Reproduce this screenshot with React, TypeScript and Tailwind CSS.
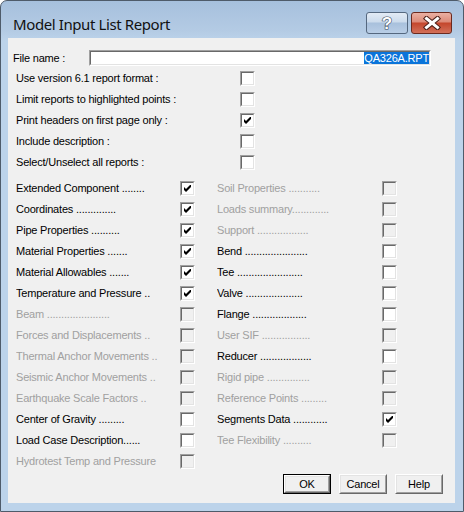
import React from "react";

type Item = {
  label: string;
  checked?: boolean;
  disabled?: boolean;
};

const topItems: Item[] = [
  { label: "Use version 6.1 report format :" },
  { label: "Limit reports to highlighted points :" },
  { label: "Print headers on first page only :", checked: true },
  { label: "Include description :" },
  { label: "Select/Unselect all reports :" },
];

const leftItems: Item[] = [
  { label: "Extended Component ........", checked: true },
  { label: "Coordinates ..............", checked: true },
  { label: "Pipe Properties ..........", checked: true },
  { label: "Material Properties .......", checked: true },
  { label: "Material Allowables .......", checked: true },
  { label: "Temperature and Pressure ..", checked: true },
  { label: "Beam ......................", disabled: true },
  { label: "Forces and Displacements ..", disabled: true },
  { label: "Thermal Anchor Movements ..", disabled: true },
  { label: "Seismic Anchor Movements ..", disabled: true },
  { label: "Earthquake Scale Factors ..", disabled: true },
  { label: "Center of Gravity ........." },
  { label: "Load Case Description......" },
  { label: "Hydrotest Temp and Pressure", disabled: true },
];

const rightItems: Item[] = [
  { label: "Soil Properties ...........", disabled: true },
  { label: "Loads summary.............", disabled: true },
  { label: "Support ..................", disabled: true },
  { label: "Bend ......................" },
  { label: "Tee ......................." },
  { label: "Valve ...................." },
  { label: "Flange ..................." },
  { label: "User SIF .................", disabled: true },
  { label: "Reducer .................." },
  { label: "Rigid pipe ...............", disabled: true },
  { label: "Reference Points .........", disabled: true },
  { label: "Segments Data ............", checked: true },
  { label: "Tee Flexibility ..........", disabled: true },
];

const CheckBox = ({ checked, disabled }: { checked?: boolean; disabled?: boolean }) => (
  <div className="w-[15px] h-[15px] shrink-0 border border-t-[#a0a0a0] border-l-[#a0a0a0] border-r-white border-b-white">
    <div
      className={`w-full h-full border border-t-[#696969] border-l-[#696969] border-r-[#e3e3e3] border-b-[#e3e3e3] flex items-center justify-center ${
        disabled ? "bg-[#f0f0f0]" : "bg-white"
      }`}
    >
      {checked && (
        <svg width="7" height="7" viewBox="0 0 7 7">
          <polygon points="0,2 2,4 7,-1 7,2 2,7 0,5" fill="#000" />
        </svg>
      )}
    </div>
  </div>
);

const Row = ({ item, labelWidth }: { item: Item; labelWidth: string }) => (
  <div className="h-[21px] flex items-center">
    <span
      className={`${labelWidth} whitespace-nowrap overflow-hidden ${
        item.disabled ? "text-[#a0a0a0]" : "text-black"
      }`}
    >
      {item.label}
    </span>
    <CheckBox checked={item.checked} disabled={item.disabled} />
  </div>
);

const PushButton = ({ label, isDefault }: { label: string; isDefault?: boolean }) => (
  <div className={`w-[48px] h-[20px] ${isDefault ? "border border-black" : ""}`}>
    <div className="w-full h-full border border-t-white border-l-white border-r-[#696969] border-b-[#696969]">
      <div className="w-full h-full border border-t-[#e3e3e3] border-l-[#e3e3e3] border-r-[#a0a0a0] border-b-[#a0a0a0] bg-[#f0f0f0] flex items-center justify-center text-black">
        {label}
      </div>
    </div>
  </div>
);

const App = () => {
  return (
    <div className="w-[464px] h-[512px] overflow-hidden bg-white">
      <div className="w-[464px] h-[512px] flex flex-col border border-[#4e5b6a] rounded-t-[7px] overflow-hidden bg-[linear-gradient(to_bottom,#a6c0dd_0px,#b4cbe4_30px,#bcd3ea_40px,#bcd3ea_100%)]">
        {/* Title bar */}
        <div className="h-[37px] shrink-0 flex items-start justify-between">
          <div className="mt-[13px] ml-[12px] h-[20px] leading-[20px] text-[15px] tracking-[-0.4px] text-[#111] font-['Noto_Sans',sans-serif]">
            Model Input List Report
          </div>
          <div className="mt-[11px] mr-[11px] flex gap-[3px]">
            <div className="w-[42px] h-[22px] rounded-[3px] border border-[#55687f] bg-[linear-gradient(to_bottom,#e2ebf5_0%,#ccdbec_45%,#a8c0dc_50%,#b9cee6_100%)] flex items-center justify-center">
              <svg width="16" height="18" viewBox="0 0 16 18">
                <text
                  x="8"
                  y="15"
                  textAnchor="middle"
                  fontFamily="'Liberation Sans', Arial, sans-serif"
                  fontWeight="bold"
                  fontSize="17"
                  fill="#fff"
                  stroke="#3a4a5c"
                  strokeWidth="1.2"
                  paintOrder="stroke"
                >
                  ?
                </text>
              </svg>
            </div>
            <div className="w-[41px] h-[22px] rounded-[3px] border border-[#6b2a1f] bg-[linear-gradient(to_bottom,#eab0a3_0%,#dc8a78_45%,#c4462c_50%,#d2705a_100%)] flex items-center justify-center">
              <svg width="18" height="14" viewBox="0 0 18 14">
                <g strokeLinecap="square">
                  <line x1="3.5" y1="2.5" x2="14.5" y2="11.5" stroke="#4a1e17" strokeWidth="5" />
                  <line x1="14.5" y1="2.5" x2="3.5" y2="11.5" stroke="#4a1e17" strokeWidth="5" />
                  <line x1="3.5" y1="2.5" x2="14.5" y2="11.5" stroke="#fff" strokeWidth="3" />
                  <line x1="14.5" y1="2.5" x2="3.5" y2="11.5" stroke="#fff" strokeWidth="3" />
                </g>
              </svg>
            </div>
          </div>
        </div>

        {/* Client area */}
        <div className="ml-[7px] mr-[8px] h-[465px] shrink-0 bg-[#f0f0f0] flex flex-col text-[11px] tracking-[-0.2px] font-['Liberation_Sans',Arial,sans-serif]">
          {/* File name */}
          <div className="mt-[12px] h-[16px] flex items-center">
            <span className="w-[81px] pl-[5px] text-black">File name :</span>
            <div className="w-[342px] h-[16px] border border-t-[#a0a0a0] border-l-[#a0a0a0] border-r-white border-b-white">
              <div className="w-full h-full border border-t-[#696969] border-l-[#696969] border-r-[#e3e3e3] border-b-[#e3e3e3] bg-white flex items-center justify-end">
                <span className="h-[12px] leading-[12px] bg-[#0a74da] text-white">QA326A.RPT</span>
              </div>
            </div>
          </div>

          {/* Options */}
          <div className="mt-[2px] pl-[8px] flex flex-col">
            {topItems.map((item) => (
              <Row key={item.label} item={item} labelWidth="w-[224px]" />
            ))}
          </div>

          {/* Report selection */}
          <div className="mt-[5px] pl-[8px] flex">
            <div className="w-[201px] flex flex-col">
              {leftItems.map((item) => (
                <Row key={item.label} item={item} labelWidth="w-[164px]" />
              ))}
            </div>
            <div className="flex flex-col">
              {rightItems.map((item) => (
                <Row key={item.label} item={item} labelWidth="w-[165px]" />
              ))}
            </div>
          </div>

          {/* Buttons */}
          <div className="mt-[2px] pr-[12px] flex justify-end gap-[8px]">
            <PushButton label="OK" isDefault />
            <PushButton label="Cancel" />
            <PushButton label="Help" />
          </div>
        </div>
      </div>
    </div>
  );
};

export default App;
